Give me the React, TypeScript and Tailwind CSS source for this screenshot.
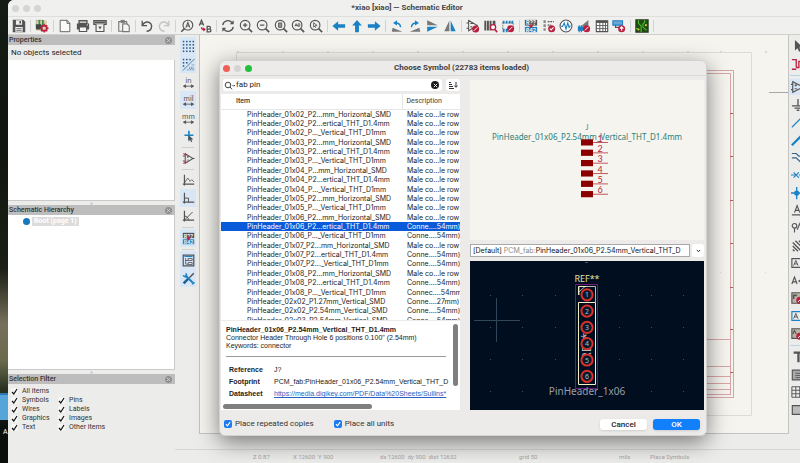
import React, { useState } from "react";

// --- Data ---
interface SymbolRow {
    name: string;
    desc: string;
}

const MALE = "Male co...le row";
const CONN = "Conne....54mm)";

const rows: SymbolRow[] = [
    { name: "PinHeader_01x02_P2...mm_Horizontal_SMD", desc: MALE },
    { name: "PinHeader_01x02_P2...ertical_THT_D1.4mm", desc: MALE },
    { name: "PinHeader_01x02_P..._Vertical_THT_D1mm", desc: MALE },
    { name: "PinHeader_01x03_P2...mm_Horizontal_SMD", desc: MALE },
    { name: "PinHeader_01x03_P2...ertical_THT_D1.4mm", desc: MALE },
    { name: "PinHeader_01x03_P..._Vertical_THT_D1mm", desc: MALE },
    { name: "PinHeader_01x04_P...mm_Horizontal_SMD", desc: MALE },
    { name: "PinHeader_01x04_P2...ertical_THT_D1.4mm", desc: MALE },
    { name: "PinHeader_01x04_P..._Vertical_THT_D1mm", desc: MALE },
    { name: "PinHeader_01x05_P2...mm_Horizontal_SMD", desc: MALE },
    { name: "PinHeader_01x05_P..._Vertical_THT_D1mm", desc: MALE },
    { name: "PinHeader_01x06_P2...mm_Horizontal_SMD", desc: MALE },
    { name: "PinHeader_01x06_P2...ertical_THT_D1.4mm", desc: CONN },
    { name: "PinHeader_01x06_P..._Vertical_THT_D1mm", desc: CONN },
    { name: "PinHeader_01x07_P2...mm_Horizontal_SMD", desc: MALE },
    { name: "PinHeader_01x07_P2...ertical_THT_D1.4mm", desc: CONN },
    { name: "PinHeader_01x07_P2..._Vertical_THT_D1mm", desc: CONN },
    { name: "PinHeader_01x08_P2...mm_Horizontal_SMD", desc: MALE },
    { name: "PinHeader_01x08_P2...ertical_THT_D1.4mm", desc: CONN },
    { name: "PinHeader_01x08_P..._Vertical_THT_D1mm", desc: "Connec....54mm" },
    { name: "PinHeader_02x02_P1.27mm_Vertical_SMD", desc: "Conne....27mm)" },
    { name: "PinHeader_02x02_P2.54mm_Vertical_SMD", desc: CONN },
    { name: "PinHeader_02x03_P2.54mm_Vertical_SMD", desc: CONN },
];

const INK = "#545454";
const BLUE = "#1a81c4";
const RED = "#b9203f";

// --- Icon pieces ---
const Svg = ({ children }: { children: React.ReactNode }) => (
    <svg viewBox="0 0 16 16" className="w-4 h-4 shrink-0" fill="none" stroke={INK} strokeWidth="1.3">
        {children}
    </svg>
);

const Lens = ({ children }: { children?: React.ReactNode }) => (
    <>
        <circle cx="7" cy="7" r="5.500" />
        <path d="M11 11l4 4" strokeWidth="1.8" />
        {children}
    </>
);

const Forbid = ({ x, y }: { x: number; y: number }) => (
    <>
        <circle cx={x} cy={y} r="4" fill={RED} stroke="none" />
        <path d={`M${x - 2} ${y + 2}l4 -4`} stroke="#fff" strokeWidth="1.1" />
    </>
);

const OpAmp = () => (
    <>
        <path d="M4 2v12l9.5-6zM1 5h3M1 11h3M13.5 8H15.5" />
        <path d="M6 6h2.4M7.2 4.8v2.4M6 10h2.4" strokeWidth="1" />
    </>
);

const Axes = () => <path d="M3 1v13M1 12.5h14" strokeWidth="1.5" />;

const UnitArrow = () => (
    <path d="M2 12.5h12M4.5 10.8L1.8 12.5l2.7 1.7zM11.5 10.8l2.7 1.7-2.7 1.7z" fill={INK} strokeWidth="1" />
);

const Unit = ({ text }: { text: string }) => (
    <Svg>
        <text x="8" y="8.5" textAnchor="middle" fontSize="9" fill={INK} stroke="none" fontFamily="Inter, sans-serif">{text}</text>
        <UnitArrow />
    </Svg>
);

const Annotate = () => (
    <Svg>
        <rect x="1" y="1" width="14" height="6.5" fill={INK} stroke="none" />
        <rect x="1" y="9" width="14" height="6" fill={BLUE} stroke="none" />
        <text x="8" y="6.8" textAnchor="middle" fontSize="6.5" fontWeight="700" fill="#eee" stroke="none" fontFamily="Inter, sans-serif">R??</text>
        <text x="8" y="14.3" textAnchor="middle" fontSize="6" fontWeight="700" fill="#eee" stroke="none" fontFamily="Inter, sans-serif">R42</text>
        <path d="M8 5v4M6 7.5l2 2.5 2-2.5z" stroke={RED} fill={RED} strokeWidth="1" />
    </Svg>
);

type Tool = [string, React.ReactNode] | null;

const topTools: Tool[] = [
    ["Save", <Svg><path d="M1.5 1.5h11l2 2v11h-13z" fill={INK} /><path d="M4.5 1.5h7v5h-7zM3.8 9h8.4v5.5H3.800z" fill="#eee" stroke="none" /><path d="M8.500 2.200h1.800v3H8.500z" fill={INK} stroke="none" /><path d="M5 11h6M5 13h6" strokeWidth=".9" /></Svg>],
    null,
    ["Schematic setup", <Svg><rect x="1.500" y="1.500" width="12" height="12" fill="#d8cfa8" stroke="none" /><path d="M1.500 9V1.500H9" stroke="#b8b8a0" /><path d="M5 1v7M9 1v6" stroke="#3c8a4a" strokeWidth="2" /><rect x="1" y="6" width="6" height="6" fill="#3d4a3f" stroke="none" /><circle cx="10.500" cy="10.500" r="3" stroke={RED} strokeWidth="2" /><path d="M10.500 5.500v2M10.500 13.500v2M5.500 10.500h2M13.500 10.500h2M7 7l1.400 1.400M14 7l-1.400 1.400M7 14l1.400-1.400M14 14l-1.400-1.400" stroke={RED} strokeWidth="1.600" /></Svg>],
    null,
    ["Page settings", <Svg><path d="M2.500 1.500h8L13.500 5v9.500h-11z" fill="#fafafa" strokeWidth="1" /><path d="M10.300 1.500V5h3.200" strokeWidth="1" /></Svg>],
    ["Print", <Svg><path d="M3.500 2h9v3h-9z" strokeWidth="1.500" /><path d="M1 5h14v7H1z" fill={INK} stroke="none" /><path d="M3.800 9h8.400v5.300H3.800z" fill="#f4f4f4" /><circle cx="12.800" cy="6.800" r=".7" fill="#fff" stroke="none" /></Svg>],
    ["Plot", <Svg><path d="M1 2h14v4H1z" strokeWidth="1.500" fill="#ddd" /><path d="M3.500 6v8.300h9V6" fill="#f4f4f4" /><path d="M2 3.800h12" strokeWidth="1.600" /><path d="M6 8.500h4l-2 3.500z" fill={INK} stroke="none" /></Svg>],
    null,
    ["Paste", <Svg><path d="M2 3h9v11H2z" stroke="#777" /><path d="M4.500 1.500h4v2.500h-4z" fill="#777" stroke="#777" strokeWidth=".8" /><path d="M6.500 5.500h5l2.500 2.500v6.500H6.500z" fill="#f6f6f6" stroke="#777" /></Svg>],
    null,
    ["Undo", <Svg><path d="M2.500 2v5.500H8" strokeWidth="1.500" /><path d="M2.800 7.200C4.500 3 10 2 12.500 5.500c2.300 3.500 0 8.500-5 8.500" strokeWidth="1.600" /></Svg>],
    ["Redo", <Svg><g stroke="#c3c3c3"><path d="M13.500 2v5.500H8" strokeWidth="1.500" /><path d="M13.200 7.200C11.500 3 6 2 3.500 5.500c-2.300 3.500 0 8.500 5 8.500" strokeWidth="1.600" /></g></Svg>],
    null,
    ["Find", <Svg><circle cx="9" cy="7" r="5.600" /><path d="M5 11L1.500 14.500" strokeWidth="1.800" /><path d="M6.700 9.800L9 4l2.300 5.800M7.500 8h3" strokeWidth="1.200" /></Svg>],
    ["Find and replace", <Svg><path d="M1.500 7.500L4 1.500l2.500 6M2.500 5.500h3" strokeWidth="1.500" /><path d="M10.500 8.500h2.200a1.500 1.500 0 0 1 0 3h-2.200zM10.500 11.500h2.700a1.600 1.600 0 0 1 0 3.200h-2.700z" strokeWidth="1.500" /><path d="M4 9.500c0 2 1.500 2.500 3 2.500" stroke={RED} strokeWidth="1.500" /><path d="M6 9.500L9 12l-3 2.300z" fill={RED} stroke="none" /></Svg>],
    null,
    ["Refresh", <Svg><path d="M2 7a6 6 0 0 1 10.500-3M14 9a6 6 0 0 1-10.500 3" strokeWidth="1.500" /><path d="M14.500 1.500v4.500H10z" fill={INK} stroke="none" /><path d="M1.500 14.500V10H6z" fill={INK} stroke="none" /></Svg>],
    ["Zoom in", <Svg><Lens><path d="M4.500 7h5M7 4.500v5" strokeWidth="1.400" /></Lens></Svg>],
    ["Zoom out", <Svg><Lens><path d="M4.500 7h5" strokeWidth="1.400" /></Lens></Svg>],
    ["Zoom to page", <Svg><Lens><path d="M5.200 4.500h3.600v5H5.200z" fill="#999" strokeWidth="1" /></Lens></Svg>],
    ["Zoom to objects", <Svg><Lens><path d="M4.500 8.300l1.300-3 1.300 3M8 5.500h2v2.800H8zM4.500 7.500h4" strokeWidth=".9" /></Lens></Svg>],
    ["Zoom to selection", <Svg><Lens><path d="M5.300 4.300v5l1.400-1.200 1 2M5.300 4.300l4 3.200H7" strokeWidth="1" /></Lens></Svg>],
    null,
    ["Navigate back", <Svg><path d="M.5 8L7 2.500v3.500h8v4H7v3.500z" fill={BLUE} stroke="none" /></Svg>],
    ["Navigate up", <Svg><path d="M8 1L2.500 7.500h3.300V15h4.400V7.500h3.300z" fill={BLUE} stroke="none" /></Svg>],
    ["Navigate forward", <Svg><path d="M15.500 8L9 2.500v3.500H1v4h8v3.500z" fill={BLUE} stroke="none" /></Svg>],
    null,
    ["Rotate CCW", <Svg><path d="M2 14.500h12L3 10z" fill="#777" stroke="none" /><path d="M12 9.500c0-3.500-2-5-5.500-5" stroke={BLUE} strokeWidth="1.600" /><path d="M8 1.500v6L3.500 4.500z" fill={BLUE} stroke="none" /></Svg>],
    ["Rotate CW", <Svg><path d="M2 14.500h12L13 10z" fill="#777" stroke="none" /><path d="M4 9.500c0-3.500 2-5 5.500-5" stroke={BLUE} strokeWidth="1.600" /><path d="M8 1.500v6l4.500-3z" fill={BLUE} stroke="none" /></Svg>],
    ["Mirror vertically", <Svg><path d="M2.500 1.500v5.700h12z" fill="#777" stroke="none" /><path d="M2.500 14.500V8.800h12z" fill={BLUE} stroke="none" /></Svg>],
    ["Mirror horizontally", <Svg><path d="M1.500 14h5.700V2z" fill="#777" stroke="none" /><path d="M14.500 14H8.800V2z" fill={BLUE} stroke="none" /></Svg>],
    null,
    ["Symbol editor", <Svg><path d="M3 1.500v12l10-6zM.5 4.500H3M.5 10.500H3M5 5h3M5 9h2" strokeWidth="1.200" /><Forbid x={11} y={11.500} /></Svg>],
    ["Symbol browser", <Svg><path d="M1.500 2v11M4.500 2v11M7.500 2v11" strokeWidth="2.200" /><path d="M10 2h3v5h-3z" fill={INK} stroke="none" /><circle cx="10.300" cy="9.500" r="3" fill="#fff" stroke={RED} strokeWidth="1.500" /><path d="M12.500 12l2.500 3" stroke={RED} strokeWidth="1.800" /></Svg>],
    ["Footprint editor", <Svg><path d="M2 4.500h12v8H2z" stroke="#888" strokeDasharray="2 1" /><path d="M3 2v3M6.500 2v3M10 2v3M13 2v3M3 11v4M6.500 11v4" stroke={BLUE} strokeWidth="2" /><Forbid x={11} y={11} /></Svg>],
    null,
    ["Annotate", <Annotate />],
    ["Electrical rules check", <Svg><path d="M3 1.500v13" strokeDasharray="3 1.500" strokeWidth="2.600" stroke="#888" /><path d="M6.500 3h7M6.500 7h4" strokeDasharray="2 1" /><circle cx="11" cy="11" r="4" fill={RED} stroke="none" /><path d="M9 11l1.500 1.500 2.700-3" stroke="#fff" strokeWidth="1.200" /></Svg>],
    ["Simulator", <Svg><circle cx="8" cy="8" r="6.800" fill="#fff" strokeWidth="1.200" /><path d="M2.500 8.500h1.500L6 4.500l2 7 2-7 1.500 5 1-1.500h1" stroke={BLUE} strokeWidth="1.300" /></Svg>],
    ["Assign footprints", <Svg><path d="M13 1v9L5 8z" fill="#777" stroke="none" /><path d="M1 8.500h7v5H1z" fill={BLUE} stroke="none" /><path d="M2.500 7v8M5 7v8" stroke={BLUE} /><Forbid x={11} y={11} /></Svg>],
    ["Symbol fields table", <Svg><path d="M1.500 2h13v12.500h-13z" fill="#fff" /><path d="M1.500 3.200h13" strokeWidth="2.600" /><path d="M5.500 3v11.500M9 3v11.500M12 3v11.500M1.500 7.500h13M1.500 11h13" strokeWidth="1" /></Svg>],
    ["Bill of materials", <Svg><path d="M1 2h11v5H1z" fill="#6aa7d6" stroke={BLUE} /><path d="M4 7v2.500h5" stroke={INK} /><circle cx="11" cy="11" r="4" fill={RED} stroke="none" /><path d="M11 13.500v-4M9 11l2-2 2 2" stroke="#fff" strokeWidth="1.300" /></Svg>],
    null,
    ["Open PCB editor", <Svg><path d="M1 1h14v14H1z" fill="#1d4d10" stroke="#2c3b24" /><path d="M4 1v4l3 3v7M11 1v3l-2 2v3l4 4M1 11h3" stroke="#4cb72f" strokeWidth="1.300" /><circle cx="12.500" cy="7" r="1.200" fill="#d8c93b" stroke="none" /><circle cx="4" cy="12" r="1.200" fill="#d8c93b" stroke="none" /></Svg>],
    null,
];

const Dots = ({ half }: { half?: boolean }) => (
    <Svg>
        <g fill="#1f4e7d" stroke="none">
            {[2, 6, 10, 14].map((y) =>
                [2, 6, 10, 14].map((x) =>
                    half && x + y > 14 ? null : <rect key={`${x}-${y}`} x={x - 1} y={y - 1} width="1.800" height="1.800" />
                )
            )}
        </g>
        {half && <path d="M1 15.500L15.500 1" stroke="#2d6698" strokeWidth="1" />}
        {half && <path d="M6 14.500h9M9 11.500h6M12 8.500h3M9 13h6" stroke="#2d6698" strokeWidth="1" strokeDasharray="1 1" />}
    </Svg>
);

const leftTools: ([string, React.ReactNode, boolean] | null)[] = [
    ["Show grid", <Dots />, true],
    ["Grid overrides", <Dots half />, true],
    ["Inches", <Unit text="in" />, false],
    ["Mils", <Unit text="mil" />, true],
    ["Millimeters", <Unit text="mm" />, false],
    ["Full crosshair", <Svg><path d="M8.500 1v11M3 6.500h11" stroke={BLUE} strokeWidth="2" /><path d="M8 6v8l2-1.700 1.200 2.700 1.400-.7-1.200-2.600H14z" fill={INK} stroke="none" /></Svg>, false],
    null,
    ["Show hidden pins", <Svg><OpAmp /><path d="M1.500 2l5 2M1.500 14l5-2" stroke={RED} strokeWidth="1.200" /></Svg>, false],
    null,
    ["Free angle", <Svg><Axes /><path d="M3 11l4-6 3 4 2-2 3 3" strokeWidth="1" /></Svg>, false],
    ["Right angle", <Svg><Axes /><path d="M3 7.500h5v5" strokeWidth="1.200" /></Svg>, true],
    ["45 degrees", <Svg><Axes /><path d="M3 12.500L13 2.500M3 7.500c3 0 5 2 5 5" strokeWidth="1.200" /></Svg>, false],
    null,
    ["Auto annotate", <Annotate />, true],
    null,
    ["Hierarchy navigator", <Svg><path d="M1.500 1.500h13v13h-13z" strokeWidth="1.500" /><path d="M3 3h10" stroke={BLUE} /><path d="M4.500 5v7.500h3M4.500 8h3" strokeWidth="1" /><path d="M7.500 5.500h5v2.500h-5zM7.500 10.500h5v2.500h-5z" strokeWidth="1" /></Svg>, true],
    ["Properties manager", <Svg><path d="M4 4l9 9" stroke={BLUE} strokeWidth="2.400" /><path d="M13 15.500a2.500 2.500 0 0 1 2.500-2.500" stroke={BLUE} strokeWidth="2" /><path d="M1.500 4a3 3 0 0 0 4 1.500M4.500 1.500a3 3 0 0 1 1 3.500" stroke={BLUE} strokeWidth="1.800" /><path d="M14.500 1.500L9 7" stroke={INK} strokeWidth="1.800" /><path d="M7.500 8.500l-5.500 5.500" stroke="#1b5f96" strokeWidth="3" /></Svg>, true],
];

const Tag = ({ x = 3, color = INK }: { x?: number; color?: string }) => (
    <>
        <path d={`M${x - 2} 3h14v10h-14z`} stroke={color} />
        <path d={`M${x} 11l2.500-6 2.500 6M${x + 1} 9h3`} strokeWidth="1.100" />
    </>
);

const rightTools: ([string, React.ReactNode, boolean] | null)[] = [
    ["Select", <Svg><path d="M4.500 1v12l3-2.500 1.800 4 2-1-1.800-3.800h4z" fill={INK} stroke="none" /></Svg>, false],
    ["Highlight net", <Svg><path d="M1 3h5v9M1 14h5M6 12h3V5h5" stroke={RED} strokeWidth="1.500" /></Svg>, false],
    null,
    ["Place symbols", <Svg><path d="M2 2v12l12-6zM0 5h2M0 11h2" /><path d="M4 6h3M5.500 4.500v3M4 10h3" strokeWidth="1" /></Svg>, true],
    ["Place power", <Svg><path d="M8 1v8M1 9h14M4 11.500h8M6.500 14h3" strokeWidth="1.500" /></Svg>, false],
    ["Draw wires", <Svg><path d="M1 14L14 1" stroke={BLUE} strokeWidth="1.300" /></Svg>, false],
    ["Draw buses", <Svg><path d="M1 14L14 1" stroke={BLUE} strokeWidth="2.600" /></Svg>, false],
    ["Bus entries", <Svg><path d="M1 4h5l3 3h6M1 9h5l4 4h5" stroke="#37648a" strokeWidth="1.400" /></Svg>, false],
    ["No connect", <Svg><path d="M0 8h5M3 5l6 6M3 11l6-6M9 8h6" stroke={BLUE} strokeWidth="1.300" /></Svg>, false],
    ["Junction", <Svg><path d="M0 8h15M6.500 1v14" stroke={BLUE} strokeWidth="1.500" /><circle cx="6.500" cy="8" r="3" fill={BLUE} stroke="none" /></Svg>, false],
    ["Net label", <Svg><path d="M1 13.500h14M4 11l3-8 3 8M5 8.500h4" /></Svg>, false],
    ["Net class", <Svg><circle cx="4" cy="5.500" r="2.600" /><path d="M4 8v5M7 10l3-7 3 7" /></Svg>, false],
    ["Rule area", <Svg><path d="M2 4l9 9M5 2l9 9M2 8l6 6M9 2l5 5M2 12l2 2" strokeWidth="1.500" /></Svg>, false],
    ["Global label", <Svg><Tag /></Svg>, false],
    ["Hierarchical label", <Svg><path d="M1 11.500l3-8 3 8M2 9h4M13 5l-4 3 4 3" /></Svg>, false],
    ["Draw sheet", <Svg><path d="M1 2h14v12H1z" fill="#b9b4a4" /><path d="M3 9V5h4" strokeWidth="1.800" /><Forbid x={10} y={10.500} /></Svg>, false],
    ["Sheet pins", <Svg><Tag color={BLUE} /></Svg>, false],
    ["Sync sheet pins", <Svg><path d="M1 2h14v11H1z" fill="#b9b4a4" /><path d="M2 8l2-4 2 4" /><Forbid x={10} y={10.500} /></Svg>, false],
    null,
    ["Text", <Svg><path d="M3 3h11M8.500 3v11" strokeWidth="2.600" /></Svg>, false],
    ["Text box", <Svg><path d="M1.500 2.500h14v11h-14z" fill="#aaa" /><path d="M5 6h8M5 8.500h8M5 11h8" strokeWidth="1" /></Svg>, false],
    ["Table", <Svg><path d="M1 2h14v12H1zM1 6h14M1 10h14M5.500 2v12M10 2v12" strokeWidth="1.100" /></Svg>, false],
    ["Rectangle", <Svg><path d="M1.500 3h13v10h-13z" fill="#bbb" /></Svg>, false],
];

// --- Sidebar ---
const PaneHeader = ({ title }: { title: string }) => (
    <div className="h-[10px] shrink-0 bg-[#bdbdbd] flex items-center justify-between pl-px pr-[3px]">
        <h2 className="text-[7px] leading-[10px] font-medium text-[#333]">{title}</h2>
        <button aria-label={`Close ${title}`} className="w-[7px] h-[7px] rounded-full bg-[#8f8f8f] flex items-center justify-center">
            <svg viewBox="0 0 6 6" className="w-[5px] h-[5px]" stroke="#d6d6d6" strokeWidth="1"><path d="M1 1l4 4M5 1L1 5" /></svg>
        </button>
    </div>
);

const Sash = () => (
    <div className="h-[5px] shrink-0 flex items-center justify-center border-t border-[#c9c9c9]">
        <span className="w-[3px] h-[3px] rounded-full bg-[#d2d2d2]"></span>
    </div>
);

const FilterCheck = ({ label }: { label: string }) => {
    const [on, setOn] = useState(true);
    return (
        <label className="flex items-center gap-[4px] h-[9px] text-[7px] leading-[9px] text-[#333]">
            <span className="grid w-[7px] h-[7px]">
                <input type="checkbox" checked={on} onChange={() => setOn(!on)} className="peer appearance-none [grid-area:1/1] w-[7px] h-[7px] rounded-[1px] bg-[#f6f6f6]" />
                <svg viewBox="0 0 7 7" className="invisible peer-checked:visible pointer-events-none [grid-area:1/1] w-[7px] h-[7px]" fill="none" stroke="#111" strokeWidth="1.2"><path d="M1 4l1.800 2L6 1" /></svg>
            </span>
            {label}
        </label>
    );
};

const Sidebar = () => (
    <aside className="w-[167px] shrink-0 flex flex-col">
        <PaneHeader title="Properties" />
        <p className="h-[15px] shrink-0 pl-[3px] text-[8px] leading-[15px] text-[#222]">No objects selected</p>
        <div className="h-[140px] shrink-0 bg-white border-r border-[#c9c9c9]"></div>
        <Sash />
        <PaneHeader title="Schematic Hierarchy" />
        <div className="flex-1 bg-white border-r border-[#c9c9c9] pt-[2px] pl-[15px]">
            <div className="flex items-center gap-[2px]">
                <span className="w-[7px] h-[7px] rounded-full bg-[#1878bd]"></span>
                <span className="bg-[#dcdcdc] text-white text-[7px] leading-[9px] font-bold px-[2px]">Root (page 1)</span>
            </div>
        </div>
        <Sash />
        <PaneHeader title="Selection Filter" />
        <div className="grid grid-cols-[47px_1fr] pl-[3px] pt-[3px] pb-[31px]">
            <div className="col-span-2"><FilterCheck label="All items" /></div>
            <FilterCheck label="Symbols" />
            <FilterCheck label="Pins" />
            <FilterCheck label="Wires" />
            <FilterCheck label="Labels" />
            <FilterCheck label="Graphics" />
            <FilterCheck label="Images" />
            <FilterCheck label="Text" />
            <FilterCheck label="Other items" />
        </div>
    </aside>
);

// --- Sheet drawn behind the dialog ---
const Sheet = () => (
    <svg viewBox="0 0 590 399" className="block w-[590px] h-[399px]" fill="none">
        <path d="M36.500 380V17.500H551.500V380M20 380.500H551.500" stroke="#dcdbd6" />
        <g stroke="#d8a5a5">
            <path d="M300 35.500H533.500V362.500H300M300 38.500H530.500V360" />
            <path d="M500 304.500h31M500 331.500h31M500 341.500h31M500 348.500h31M500 354.500h31M500 359.500h31" />
            <path d="M530 78.500h3M530 121.500h3M530 165.500h3M530 208.500h3M530 252.500h3M530 294.500h3M530 337.500h3" stroke="#b06060" />
        </g>
        <path d="M569 57.500h21" stroke="#a8a8a8" />
        <g fill="#d8d7d2">
            {[37, 82, 127, 172, 217, 262, 307, 352, 397, 442, 487, 520, 565].map((x) => (
                <rect key={x} x={x} y="16" width="2" height="2" />
            ))}
            <rect x="520" y="237" width="1" height="1" />
            <rect x="565" y="237" width="1" height="1" />
        </g>
    </svg>
);

// --- Dialog parts ---
const SymbolPreview = () => (
    <svg viewBox="0 0 234 160" className="w-full h-full" fontFamily="Lato, sans-serif">
        <text x="117" y="50" textAnchor="middle" fontSize="7" fill="#3d837a">J</text>
        <text x="117" y="60" textAnchor="middle" fontSize="8" fill="#2a8077" fontFamily="'Noto Sans', sans-serif">PinHeader_01x06_P2.54mm_Vertical_THT_D1.4mm</text>
        {[1, 2, 3, 4, 5, 6].map((n, i) => (
            <g key={n} transform={`translate(0 ${62.500 + i * 10.350})`}>
                <rect x="111" y="-3.200" width="12" height="6.200" fill="#8c0000" />
                <path d="M123 0h15" stroke="#c05a60" />
                <text x="130" y="-1" textAnchor="middle" fontSize="9" fill="#b8283a">{n}</text>
            </g>
        ))}
    </svg>
);

const FootprintPreview = () => (
    <svg viewBox="0 0 234 149" className="w-full h-full" fill="none" fontFamily="'Noto Sans', sans-serif">
        <g fill="#3c4d68">
            {[20, 52, 85, 149, 181, 213].map((x) =>
                [34, 66, 98, 130].map((y) => <rect key={`${x}-${y}`} x={x} y={y} width="1" height="1" />)
            )}
            <rect x="115" y="1" width="3" height="1" />
        </g>
        <path d="M4 59.500h46M26.500 37v44" stroke="#33475c" />
        <text x="117" y="21" textAnchor="middle" fontSize="9" fill="#e2e2a0">REF**</text>
        <path d="M105.500 23.500h22v104h-22z" stroke="#6d1a80" />
        <path d="M109 34v-8.500h9M109 31l6-5.500h10.500V41" stroke="#b9b9a6" />
        <path d="M108.500 41.500h17v82h-17z" stroke="#eeeec4" />
        <path d="M108.500 34v-8.500h8" stroke="#eeeec4" />
        <text transform="translate(121 82) rotate(-90)" textAnchor="middle" fontSize="12" fill="#bdbdbd">REF**</text>
        {[1, 2, 3, 4, 5, 6].map((n, i) => (
            <g key={n} transform={`translate(117 ${33.800 + i * 16.300})`}>
                <circle r="5.600" fill="#0a1828" stroke="#d9302c" strokeWidth="2" />
                <text y="2.600" textAnchor="middle" fontSize="7" fill="#9cc4e8">{n}</text>
            </g>
        ))}
        <text x="117" y="134" textAnchor="middle" fontSize="10" fill="#9b9ea3">PinHeader_1x06</text>
    </svg>
);

const Details = () => (
    <div className="h-[89px] shrink-0 mt-px bg-white flex flex-col font-['Liberation_Sans',sans-serif] text-[7px] leading-[8px] text-[#1c1c1c]">
        <div className="flex flex-1 min-h-0">
            <div className="flex-1 min-w-0 overflow-hidden whitespace-nowrap pt-[5px] pl-[5px] mr-px">
                <p className="font-bold">PinHeader_01x06_P2.54mm_Vertical_THT_D1.4mm</p>
                <p>Connector Header Through Hole 6 positions 0.100" (2.54mm)</p>
                <p>Keywords: connector</p>
                <hr className="mt-[6px] mb-[7px] mr-[6px] border-[#9a9a9a]" />
                <div className="pl-[3px]">
                    <table className="w-full table-fixed">
                        <tbody>
                            <tr className="h-[12px]"><th className="w-[45px] text-left font-bold">Reference</th><td>J?</td></tr>
                            <tr className="h-[12px]"><th className="text-left font-bold">Footprint</th><td className="overflow-hidden">PCM_fab:PinHeader_01x06_P2.54mm_Vertical_THT_D</td></tr>
                            <tr className="h-[12px]"><th className="text-left font-bold">Datasheet</th><td className="overflow-hidden"><a href="#datasheet" className="text-[#2a5fc4] underline">https://media.digikey.com/PDF/Data%20Sheets/Sullins*</a></td></tr>
                        </tbody>
                    </table>
                </div>
            </div>
            <div className="w-[7px] pt-[3px]">
                <div className="w-[5px] h-[62px] rounded-full bg-[#7f7f7f]"></div>
            </div>
        </div>
        <div className="h-[6px] pl-[2px]">
            <div className="w-[149px] h-[5px] rounded-full bg-[#7f7f7f]"></div>
        </div>
    </div>
);

const BlueCheck = ({ label }: { label: string }) => {
    const [on, setOn] = useState(true);
    return (
        <label className="flex items-center gap-[3px] text-[8px] leading-[10px] text-[#333]">
            <span className="grid w-2 h-2">
                <input type="checkbox" checked={on} onChange={() => setOn(!on)} className="peer appearance-none [grid-area:1/1] w-2 h-2 rounded-[2px] bg-white checked:bg-[#1a7bf2]" />
                <svg viewBox="0 0 8 8" className="invisible peer-checked:visible pointer-events-none [grid-area:1/1] w-2 h-2" fill="none" stroke="#fff" strokeWidth="1.2"><path d="M2 4.200l1.500 1.600L6.200 2" /></svg>
            </span>
            {label}
        </label>
    );
};

const ChooseSymbolDialog = () => {
    const [query, setQuery] = useState("fab pin");
    const [selected, setSelected] = useState(12);

    return (
        <section role="dialog" aria-label="Choose Symbol" className="flex-1 min-w-0 flex flex-col rounded-[6px] overflow-hidden bg-[#ecebea] border border-[#d3d2d1] shadow-[0_6px_22px_rgba(0,0,0,0.5)]">
            <header className="h-[15px] shrink-0 flex items-center border-b border-[#d9d8d7] pl-[3px]">
                <div className="flex gap-[4px]">
                    <button aria-label="Close" className="w-[7px] h-[7px] rounded-full bg-[#ee5f57]"></button>
                    <button aria-label="Minimize" className="w-[7px] h-[7px] rounded-full bg-[#d5d4d4]"></button>
                    <button aria-label="Zoom" className="w-[7px] h-[7px] rounded-full bg-[#22c03c]"></button>
                </div>
                <h1 className="flex-1 pr-[35px] text-center text-[8px] leading-[14px] font-bold text-[#3f3f3f]">Choose Symbol (22783 items loaded)</h1>
            </header>

            <div className="flex-1 min-h-0 flex gap-[10px] pt-[3px] pl-px pr-[2px]">
                {/* Search, list and details */}
                <div className="w-[239px] shrink-0 flex flex-col">
                    <div className="h-[12px] shrink-0 flex items-center pl-[2px] gap-[4px]">
                        <div className="flex-1 h-full flex items-center bg-white rounded-[3px] px-px">
                            <svg viewBox="0 0 12 9" className="w-[12px] h-[9px]" fill="none" stroke="#444" strokeWidth="1">
                                <circle cx="4" cy="4" r="2.800" />
                                <path d="M6 6l2 2.300M8.500 4l1.200 1.200L11 4" />
                            </svg>
                            <input
                                type="text"
                                aria-label="Search symbols"
                                className="flex-1 min-w-0 outline-none text-[8px] leading-[12px] text-[#222]"
                                value={query}
                                onChange={(e) => setQuery(e.target.value)}
                            />
                            <button aria-label="Clear search" onClick={() => setQuery("")} className="w-[8px] h-[8px] mr-[2px] rounded-full bg-[#1b1b1b] flex items-center justify-center">
                                <svg viewBox="0 0 6 6" className="w-[5px] h-[5px]" stroke="#fff" strokeWidth="1.100"><path d="M1 1l4 4M5 1L1 5" /></svg>
                            </button>
                        </div>
                        <button aria-label="Sort" className="w-[14px] h-full bg-white rounded-[3px] flex items-center justify-center">
                            <svg viewBox="0 0 10 9" className="w-[10px] h-[9px]" fill="none" stroke="#333" strokeWidth="1"><path d="M1 1.500h2M1 3.500h3M1 5.500h4M1 7.500h5M8 1v5M6.300 4.500L8 6.300l1.700-1.800" /></svg>
                        </button>
                    </div>

                    <div className="flex-1 min-h-0 overflow-hidden mt-[3px] bg-white">
                        <table className="w-full h-[231px] table-fixed border-collapse whitespace-nowrap text-[7px] leading-[9px] text-[#1c1c1c]">
                            <thead>
                                <tr className="h-[15px] text-[#3c3c3c]">
                                    <th className="w-[181px] p-0 pl-[15px] text-left font-medium border-b border-[#e6e6e6]">Item</th>
                                    <th className="p-0 pl-[4px] text-left font-normal border-b border-l border-[#e6e6e6]">Description</th>
                                </tr>
                            </thead>
                            <tbody className="font-[Inter,sans-serif] [font-variant-ligatures:no-contextual]">
                                {rows.map((row, idx) => (
                                    <tr key={row.name} onClick={() => setSelected(idx)} className={idx === selected ? "bg-[#0a5bd9] text-white" : ""}>
                                        <td className="p-0 pl-[26px] overflow-hidden">{row.name}</td>
                                        <td className="p-0 pl-[5px] overflow-hidden">{row.desc}</td>
                                    </tr>
                                ))}
                            </tbody>
                        </table>
                    </div>

                    <Details />
                </div>

                {/* Symbol and footprint previews */}
                <div className="flex-1 min-w-0 flex flex-col gap-[4px] pt-px">
                    <div className="flex-1 min-h-0 bg-[#f5f4ef]"><SymbolPreview /></div>
                    <div className="relative h-[13px] shrink-0 flex gap-[2px]">
                        <div aria-hidden="true" className="flex-1 min-w-0 overflow-hidden whitespace-nowrap bg-white border border-[#a9a9a9] pl-[2px] pr-px font-[Inter,sans-serif] [font-variant-ligatures:no-contextual] text-[7px] leading-[11px] text-[#111]">
                            [Default] <span className="text-[#8a8a8a]">PCM_fab:</span>PinHeader_01x06_P2.54mm_Vertical_THT_D
                        </div>
                        <span aria-hidden="true" className="w-[12px] bg-white rounded-[3px] flex items-center justify-center">
                            <svg viewBox="0 0 6 4" className="w-[5px] h-[4px]" fill="none" stroke="#222" strokeWidth="1.200"><path d="M1 .8l2 2 2-2" /></svg>
                        </span>
                        <select aria-label="Footprint" className="absolute inset-0 w-full text-[7px] opacity-0">
                            <option>[Default] PCM_fab:PinHeader_01x06_P2.54mm_Vertical_THT_D</option>
                        </select>
                    </div>
                    <div className="h-[149px] shrink-0 bg-[#010e20]"><FootprintPreview /></div>
                </div>
            </div>

            <footer className="h-[25px] shrink-0 flex items-center pl-[4px] pr-[6px] pt-[3px]">
                <div className="flex gap-[20px]">
                    <BlueCheck label="Place repeated copies" />
                    <BlueCheck label="Place all units" />
                </div>
                <div className="ml-auto flex gap-[6px] text-[8px] leading-[11px] font-medium">
                    <button className="w-[47px] h-[11px] rounded-[3px] bg-white text-[#222] shadow-sm">Cancel</button>
                    <button className="w-[47px] h-[11px] rounded-[3px] bg-[#1280fa] text-white shadow-sm">OK</button>
                </div>
            </footer>
        </section>
    );
};

const App = () => {
    return (
        <div className="relative h-screen flex overflow-hidden bg-[linear-gradient(180deg,#141c14_0%,#10160f_30%,#1b1f15_58%,#77705c_70%,#6a6a4c_78%,#2a3320_84%,#0d120d_92%,#0a0d0a_100%)] font-[Roboto,sans-serif]">
            {/* Desktop strip */}
            <div className="w-[8px] shrink-0 flex flex-col justify-end">
                <div className="h-[27px] bg-[#56a5d8] border-t-2 border-[#2d78b4]"></div>
                <span className="h-[43px] pt-[8px] pl-[3px] text-[7px] leading-[9px] text-white">A</span>
            </div>

            <div className="flex-1 min-w-0 flex flex-col rounded-tl-[6px] overflow-hidden bg-[#ececeb]">
                <header className="h-[17px] shrink-0 flex items-center bg-[#f0f0ef] border-b border-[#dededd] pl-[4px]">
                    <div className="flex gap-[4px]">
                        {["Close window", "Minimize window", "Zoom window"].map((name) => (
                            <button key={name} aria-label={name} className="w-[7px] h-[7px] rounded-full bg-[#d6d5d5]"></button>
                        ))}
                    </div>
                    <h1 className="flex-1 pr-[27px] text-center text-[8px] leading-[16px] font-bold text-[#474747]">*xiao [xiao] — Schematic Editor</h1>
                </header>

                <nav className="h-[18px] shrink-0 border-b border-[#cfcfce] bg-[#f0f0ef] pl-[3px]">
                    <div className="h-full max-w-[645px] flex items-center justify-between">
                        {topTools.map((tool, idx) =>
                            tool ? (
                                <button key={idx} aria-label={tool[0]} className="w-4 h-4 p-px">
                                    <span className="block [&>svg]:w-[14px] [&>svg]:h-[14px]">{tool[1]}</span>
                                </button>
                            ) : (
                                <span key={idx} className="w-1 h-3 flex justify-center"><span className="w-px h-full bg-[#d2d2d2]"></span></span>
                            )
                        )}
                    </div>
                </nav>

                <div className="flex-1 min-h-0 flex">
                    <Sidebar />

                    <div className="flex-1 min-w-0 flex flex-col">
                        <div className="flex-1 min-h-0 flex">
                            <nav className="w-[24px] shrink-0 flex flex-col items-center pl-[2px] pt-[2px]">
                                {leftTools.map((tool, idx) =>
                                    tool ? (
                                        <button key={idx} aria-label={tool[0]} aria-pressed={tool[2]} className="w-4 h-[18px] shrink-0 flex items-center justify-center aria-pressed:bg-[#d9e6f6]">
                                            <span className="[&>svg]:w-[13px] [&>svg]:h-[13px]">{tool[1]}</span>
                                        </button>
                                    ) : (
                                        <span key={idx} className="h-1 w-3 shrink-0 flex items-center"><span className="h-px w-full bg-[#cfcfcf]"></span></span>
                                    )
                                )}
                            </nav>
                            <main className="flex-1 min-w-0 overflow-hidden bg-[#f5f4ef] border-x border-b border-[#c4c3c1]">
                                <Sheet />
                            </main>
                            <nav className="w-[11px] shrink-0 overflow-hidden pt-[3px]">
                                <div className="h-[380px] w-[18px] flex flex-col items-center justify-between">
                                    {rightTools.map((tool, idx) =>
                                        tool ? (
                                            <button key={idx} aria-label={tool[0]} aria-pressed={tool[2]} className="w-[18px] h-4 pl-[2px] flex items-center aria-pressed:bg-[#d9e6f6]">
                                                <span className="[&>svg]:w-[14px] [&>svg]:h-[14px]">{tool[1]}</span>
                                            </button>
                                        ) : (
                                            <span key={idx} className="h-1 w-4 flex items-center"><span className="h-px w-full bg-[#b9d3e6]"></span></span>
                                        )
                                    )}
                                </div>
                            </nav>
                        </div>
                        <div className="h-[15px] shrink-0"></div>
                        <footer className="h-[14px] shrink-0 border-t border-[#d6d6d5] flex items-center whitespace-nowrap pl-[78px] text-[6px] leading-[12px] text-[#a5a5a5]">
                            <span className="w-[40px]">Z 0.87</span>
                            <span className="w-[87px]">X 12600&nbsp; Y 900</span>
                            <span className="w-[139px]">dx 12600&nbsp; dy 900&nbsp; dist 12632</span>
                            <span className="w-[100px]">grid 50</span>
                            <span className="w-[31px]">mils</span>
                            <span>Place Symbols</span>
                        </footer>
                    </div>
                </div>
            </div>

            <div className="absolute inset-0 flex pt-[60px] pr-[93px] pb-[27px] pl-[219px]">
                <ChooseSymbolDialog />
            </div>
        </div>
    );
};

export default App;
